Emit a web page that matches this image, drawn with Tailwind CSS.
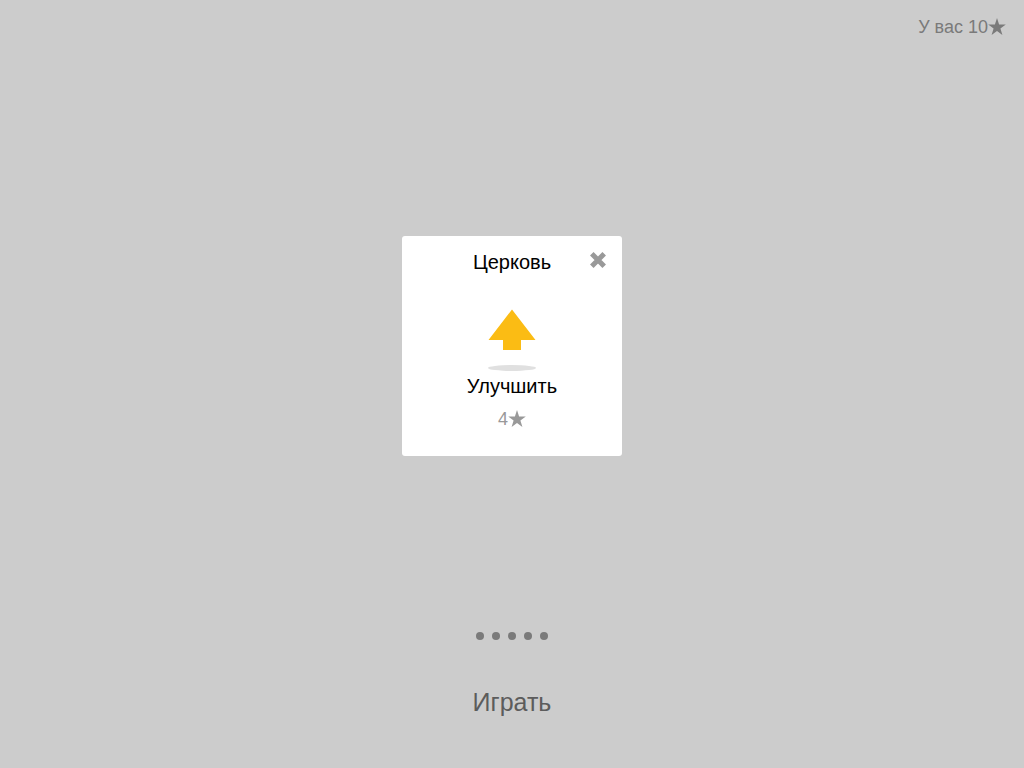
<!DOCTYPE html>
<html lang="ru">
<head>
<meta charset="utf-8">
<meta name="viewport" content="width=device-width, initial-scale=1">
<title>Церковь</title>
<script src="https://cdn.jsdelivr.net/npm/@tailwindcss/browser@4"></script>
</head>
<body class="flex min-h-screen flex-col bg-[#ccc] font-['Liberation_Sans',Arial,sans-serif]">
<header class="flex h-15 items-start justify-end px-[18px] pt-[15px] text-lg leading-6 text-[#7a7a7a]">
  <p class="flex items-center">У вас 10<svg class="size-[18px]" viewBox="0 0 18 18" fill="currentColor" role="img" aria-label="звёзд"><path d="M9 0l2.1 6.4h6.7l-5.4 4 2 6.6L9 13 3.6 17l2-6.6-5.4-4h6.7z"/></svg></p>
</header>
<main class="flex flex-1 items-center justify-center">
  <section role="dialog" aria-labelledby="title" class="flex min-h-[220px] w-[220px] flex-col rounded-[3px] bg-white">
    <div class="grid grid-cols-[1fr_auto_1fr] items-center px-4 pt-3 text-xl leading-7">
      <h1 id="title" class="col-start-2 text-black">Церковь</h1>
      <button type="button" aria-label="Закрыть" class="-mt-1 justify-self-end text-[#999]"><svg class="size-4" viewBox="0 0 16 16" fill="none" stroke="currentColor" stroke-width="5"><path d="M1.8 1.8l12.4 12.4M14.2 1.8L1.8 14.2"/></svg></button>
    </div>
    <button type="button" class="mt-7 flex flex-col items-center self-center text-xl leading-7 text-black">
      <svg class="h-[68px] w-12" viewBox="0 0 48 68" aria-hidden="true"><path fill="#fbbc14" d="M24 5.5L47.5 36H33v10H15V36H.5z"/><ellipse cx="24" cy="64" rx="24" ry="3" fill="#e0e0e0"/></svg>
      <span>Улучшить</span>
      <span class="mt-[5px] flex items-center text-lg leading-7 text-[#999]">4<svg class="size-[18px]" viewBox="0 0 18 18" fill="currentColor" role="img" aria-label="звезды"><path d="M9 0l2.1 6.4h6.7l-5.4 4 2 6.6L9 13 3.6 17l2-6.6-5.4-4h6.7z"/></svg></span>
    </button>
  </section>
</main>
<footer class="flex h-[136px] flex-col items-center">
  <div class="flex gap-2" aria-hidden="true">
    <i class="size-2 rounded-full bg-[#7a7a7a]"></i><i class="size-2 rounded-full bg-[#7a7a7a]"></i><i class="size-2 rounded-full bg-[#7a7a7a]"></i><i class="size-2 rounded-full bg-[#7a7a7a]"></i><i class="size-2 rounded-full bg-[#7a7a7a]"></i>
  </div>
  <button type="button" class="mt-11 text-[25px] leading-9 text-[#5c5c5c]">Играть</button>
</footer>
</body>
</html>
